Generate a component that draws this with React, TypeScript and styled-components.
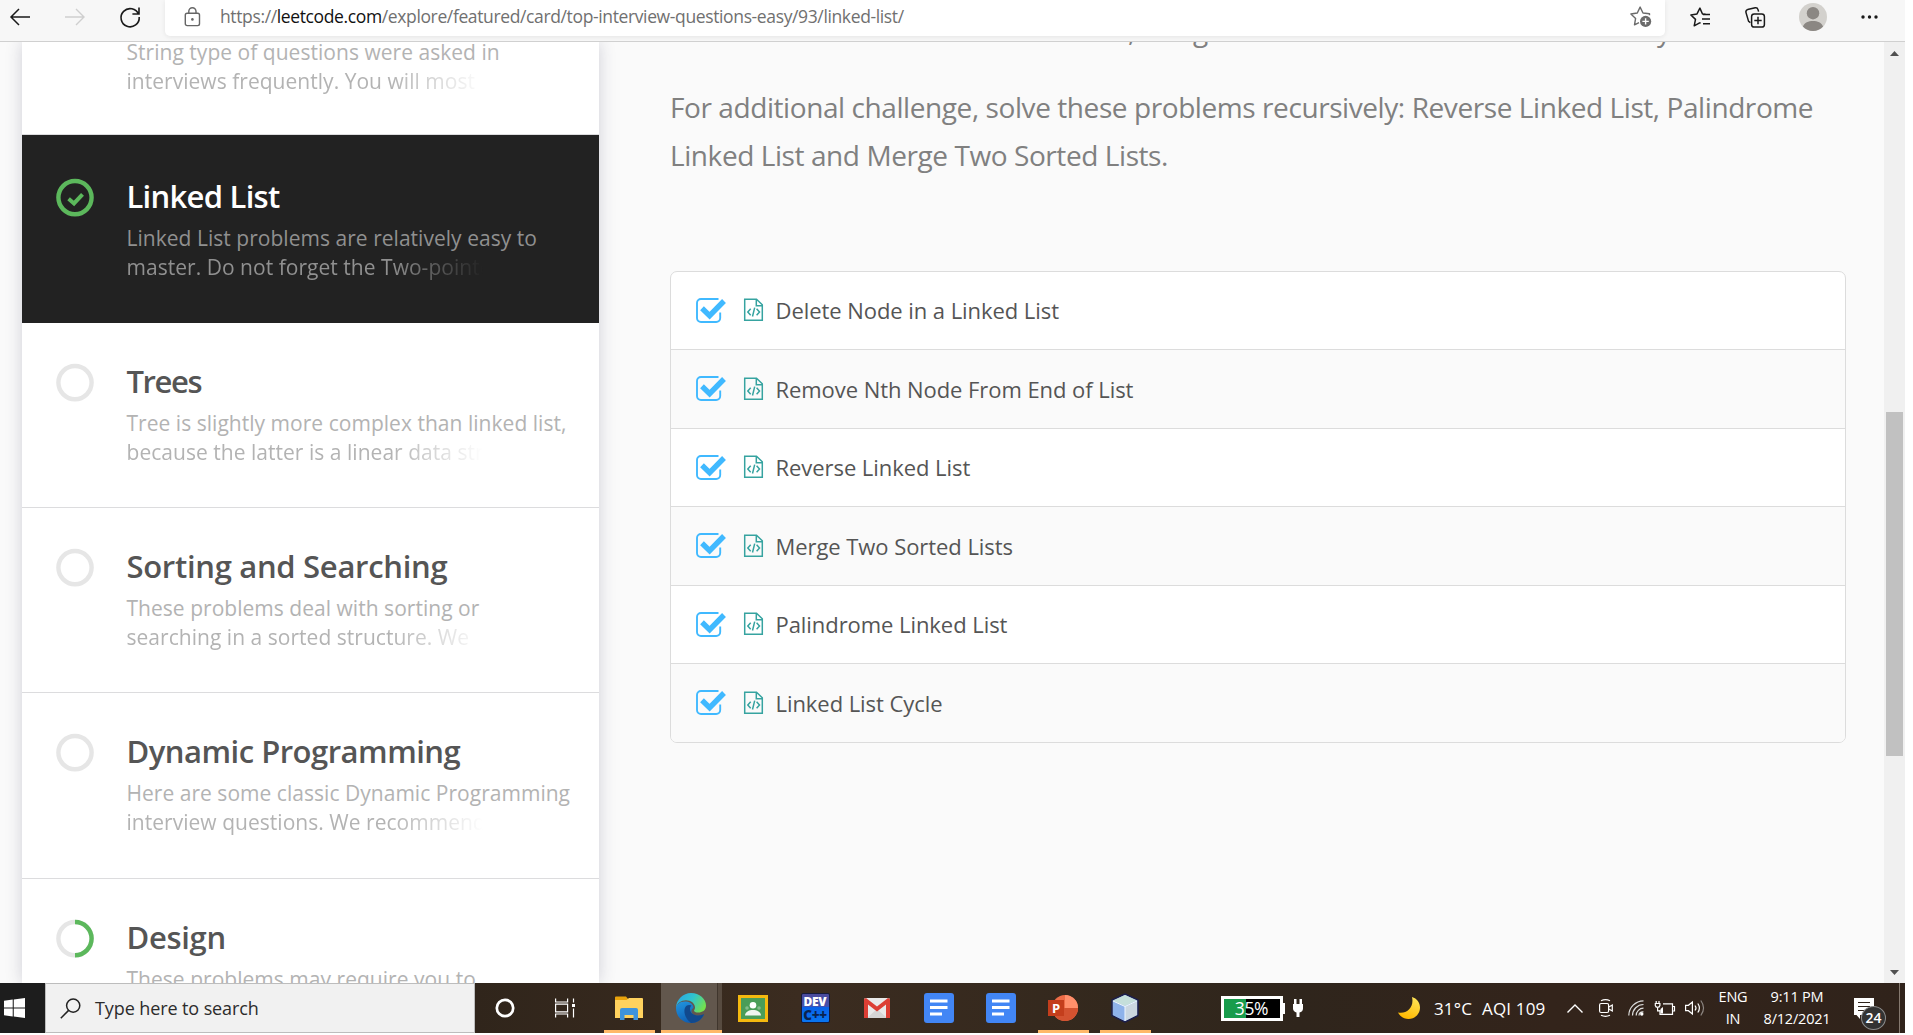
import React from "react";
import styled, { createGlobalStyle } from "styled-components";

const GlobalStyle = createGlobalStyle`
  * { box-sizing: border-box; }
  body { margin: 0; background: #fff; overflow: hidden; }
  svg { display: block; flex: none; overflow: visible; }
`;

const Screen = styled.div`
  width: 1905px;
  height: 1033px;
  display: flex;
  flex-direction: column;
  overflow: hidden;
  font-family: "Open Sans", "Noto Sans", sans-serif;
`;

/* ---------- browser toolbar ---------- */

const Toolbar = styled.header`
  height: 42px;
  flex: none;
  display: flex;
  align-items: flex-start;
  background: #f7f7f7;
  border-bottom: 1px solid #d0d0d0;
`;

const NavButtons = styled.div`
  width: 165px;
  height: 33px;
  padding-left: 10px;
  display: flex;
  align-items: center;
  gap: 35px;
`;

const AddressBar = styled.div`
  width: 1500px;
  height: 36px;
  display: flex;
  align-items: center;
  padding: 0 13px 3px 20px;
  background: #fff;
  border-radius: 0 0 5px 5px;
  box-shadow: 0 1px 5px rgba(0, 0, 0, 0.08);
`;

const Url = styled.div`
  flex: 1;
  margin-left: 19px;
  padding-bottom: 1px;
  font-size: 17.5px;
  line-height: 24px;
  letter-spacing: -0.37px;
  color: #707070;
  white-space: nowrap;
`;

const Host = styled.span`
  color: #111;
`;

const ToolbarActions = styled.div`
  height: 34px;
  margin-left: 25px;
  display: flex;
  align-items: center;
`;

const ActionSlot = styled.div<{ $width: number }>`
  width: ${(p) => p.$width}px;
`;

/* ---------- page ---------- */

const Page = styled.main`
  flex: 1;
  min-height: 0;
  display: flex;
  overflow: hidden;
  background: #fafafa;
`;

const Sidebar = styled.aside`
  width: 577px;
  margin-left: 22px;
  flex: none;
  background: #fff;
  box-shadow: 0 0 16px rgba(40, 40, 80, 0.2);
`;

const ChapterList = styled.div`
  margin-top: -90px;
`;

const Chapter = styled.article<{ $active?: boolean; $height: number }>`
  height: ${(p) => p.$height}px;
  display: flex;
  gap: 33px;
  padding: ${(p) => (p.$active ? 41 : 38)}px 0 0 33.5px;
  background: ${(p) => (p.$active ? "#222" : "#fff")};
  color: ${(p) => (p.$active ? "#fff" : "#555")};
  border-bottom: ${(p) => (p.$active ? "none" : "1px solid #dcdcde")};
`;

const ProgressSlot = styled.div`
  padding-top: 3px;
`;

const ChapterTitle = styled.h3<{ $tracking: number }>`
  margin: 0 0 8px;
  font-size: 31px;
  line-height: 40px;
  font-weight: 600;
  letter-spacing: ${(p) => p.$tracking}px;
  white-space: nowrap;
`;

const Blurb = styled.div<{ $active?: boolean }>`
  font-size: 21px;
  line-height: 29.3px;
  letter-spacing: 0.03px;
  white-space: nowrap;
  color: ${(p) => (p.$active ? "#909090" : "#b3b3b3")};
`;

const FadingLine = styled.div`
  width: 356px;
  overflow: hidden;
  mask-image: linear-gradient(to right, #000 74%, transparent 100%);
`;

const Content = styled.section`
  flex: 1;
  padding: 0 38px 0 71px;
  margin-top: -36px;
`;

const Paragraph = styled.p`
  margin: 0 0 29px;
  font-size: 28px;
  line-height: 48px;
  letter-spacing: -0.42px;
  color: #808080;
  white-space: nowrap;
`;

const ProblemCard = styled.ul`
  list-style: none;
  margin: 92px 0 0;
  padding: 0;
  width: 1176px;
  height: 472px;
  display: flex;
  flex-direction: column;
  overflow: hidden;
  background: #fff;
  border: 1px solid #dcdcdc;
  border-radius: 7px;
`;

const Problem = styled.li`
  flex: 1;
  display: flex;
  align-items: center;
  padding: 0 0 1px 25px;
  font-size: 22px;
  font-weight: 500;
  letter-spacing: -0.06px;
  color: #555;
  &:first-child { flex: 0 0 77.3px; }
  &:nth-child(even) { background: #fafafa; }
  & + & { border-top: 1px solid #dcdcdc; }
`;

const ProblemName = styled.span`
  margin-left: 12.5px;
`;

const FileSlot = styled.span`
  margin-left: 18px;
`;

const Scrollbar = styled.div`
  width: 21px;
  flex: none;
  display: flex;
  flex-direction: column;
  align-items: center;
  justify-content: space-between;
  padding: 9px 0 8px;
  background: #f0f0f0;
`;

const Thumb = styled.div`
  width: 17px;
  height: 344px;
  margin-bottom: -145px;
  margin-top: -145px;
  transform: translateY(71px);
  background: #c1c1c1;
`;

/* ---------- taskbar ---------- */

const Taskbar = styled.footer`
  height: 50px;
  flex: none;
  display: flex;
  color: #fff;
  background: linear-gradient(90deg, #1f1d1a 0, #30251b 475px, #3b2c20 800px, #33281d 1120px, #2f251c 1300px, #33241b 1550px, #30231b 100%);
`;

const Start = styled.div`
  width: 45px;
  padding: 15px 0 0 4px;
  background: #1d1d1d;
`;

const Search = styled.div`
  width: 430px;
  display: flex;
  align-items: center;
  padding-left: 14px;
  gap: 14px;
  color: #2c2c2c;
  background: #f1f1f1;
  border: 1px solid #bdbdbd;
  font-size: 18px;
  letter-spacing: -0.1px;
`;

const TaskSlot = styled.div<{ $width?: number }>`
  width: ${(p) => p.$width ?? 62}px;
  display: flex;
  flex-direction: column;
  align-items: center;
`;

const TaskButton = styled.div<{ $running?: boolean; $focused?: boolean }>`
  width: ${(p) => (p.$focused ? 61 : 51)}px;
  height: 50px;
  display: flex;
  align-items: center;
  justify-content: center;
  padding-top: ${(p) => (p.$running ? 3 : 0)}px;
  padding-right: ${(p) => (p.$focused ? 1 : 0)}px;
  border-bottom: ${(p) => (p.$running ? "3px solid #ffb969" : "none")};
  background: ${(p) =>
    p.$focused ? "linear-gradient(90deg, #62574d 56px, #40362d 56px, #40362d 57px, #574b40 57px)" : "none"};
`;

const PowerMeter = styled.div`
  width: 83px;
  margin-left: 65px;
  display: flex;
  align-items: center;
`;

const Battery = styled.div`
  width: 62px;
  height: 25px;
  border: 3px solid #fff;
  display: flex;
  align-items: center;
  justify-content: center;
  padding-right: 1px;
  background: linear-gradient(90deg, #189c4c 22px, #000 22px);
  font-size: 17.5px;
  letter-spacing: -0.4px;
`;

const BatteryTip = styled.div`
  width: 2px;
  height: 11px;
  margin-right: 7px;
  background: #fff;
`;

const Weather = styled.div`
  width: 147px;
  margin-left: 94px;
  display: flex;
  align-items: center;
  white-space: nowrap;
  font-size: 17px;
  letter-spacing: 0.15px;
`;

const Temperature = styled.span`
  margin: 0 10px 0 14px;
`;

const Tray = styled.div`
  margin-left: 22px;
  display: flex;
  align-items: center;
`;

const TraySlot = styled.div<{ $width: number }>`
  width: ${(p) => p.$width}px;
`;

const TrayText = styled.div<{ $width: number }>`
  width: ${(p) => p.$width}px;
  padding-bottom: 1px;
  text-align: center;
  font-size: 14.5px;
  line-height: 22px;
  letter-spacing: -0.2px;
`;

const Notifications = styled.div`
  position: relative;
  width: 21px;
  margin-left: 11px;
`;

const Badge = styled.span`
  position: absolute;
  left: 7px;
  top: 8px;
  width: 25px;
  height: 24px;
  border-radius: 50%;
  border: 1px solid #8c8c8c;
  background: #333;
  font-size: 14px;
  font-weight: 600;
  line-height: 21px;
  text-align: center;
`;

const ShowDesktop = styled.div`
  width: 6px;
  margin-left: auto;
  border-left: 1px solid #85796f;
`;

const ClassroomTile = styled.div`
  width: 30px;
  height: 27px;
  border: 3px solid #f5b90f;
  background: #4a9d58;
`;

const DevTile = styled.div`
  width: 29px;
  height: 30px;
  display: flex;
  flex-direction: column;
  align-items: center;
  border: 1px solid #151b3c;
  border-radius: 2px;
  background: linear-gradient(#4a4a9c, #4652ad 44%, #0a62e8 48%, #0876f2);
  font-weight: 800;
  font-size: 12px;
  line-height: 15px;
  letter-spacing: -0.3px;
`;

const DevSub = styled.div`
  color: #0b2350;
  font-size: 13.5px;
  line-height: 12px;
  letter-spacing: -0.4px;
`;

const PptMark = styled.span`
  position: absolute;
  left: 0;
  top: 5px;
  width: 16px;
  height: 16px;
  background: #c43e1c;
  font-size: 13px;
  font-weight: 700;
  line-height: 16px;
  text-align: center;
`;

const PptWrap = styled.div`
  position: relative;
`;

/* ---------- icons ---------- */

const BackArrow = ({ color }: { color: string }) => (
  <svg width="20" height="18" viewBox="0 0 20 18" fill="none" stroke={color} strokeWidth="1.5">
    <path d="M9 1 1 9l8 8M1 9h19" />
  </svg>
);

const ForwardArrow = ({ color }: { color: string }) => (
  <svg width="20" height="18" viewBox="0 0 20 18" fill="none" stroke={color} strokeWidth="1.4">
    <path d="M11 1l8 8-8 8M19 9H0" />
  </svg>
);

const Reload = () => (
  <svg width="20" height="20" viewBox="0 0 20 20" fill="none" stroke="#1a1a1a" strokeWidth="1.6">
    <path d="M18.6 7.4A9.1 9.1 0 1 0 19.2 10M19 .6V7h-6.6" />
  </svg>
);

const Lock = () => (
  <svg width="16" height="20" viewBox="0 0 16 20" fill="none" stroke="#666" strokeWidth="1.4">
    <rect x=".3" y="6.3" width="14.2" height="12.3" rx="1.8" />
    <path d="M3.8 6V4.300a3.600 3.600 0 0 1 7.200 0V6" />
    <circle cx="7.400" cy="12.400" r="1.300" fill="#666" stroke="none" />
  </svg>
);

const StarAdd = () => (
  <svg width="22" height="22" viewBox="0 0 22 22" fill="none" stroke="#6b6b6b" strokeWidth="1.4" strokeLinejoin="round">
    <path d="M19.5 9.2V7.8L13 7 10.1 1.1 7.3 7 .9 8l4.7 4.4-1.1 6.5L9 16.6" />
    <circle cx="15.6" cy="15.4" r="5.6" fill="#6b6b6b" stroke="none" />
    <path d="M15.6 12.2v6.4M12.4 15.4h6.4" stroke="#fff" />
  </svg>
);

const Favorites = () => (
  <svg width="20" height="20" viewBox="0 0 20 20" fill="none" stroke="#1a1a1a" strokeWidth="1.5" strokeLinejoin="round">
    <path d="M15.5 7.2 12.5 7 9.9 1.1 7 6.9.9 8l4.6 4.4-1.3 6.4 5.4-2.9 1-.2" />
    <path d="M13 7.4h7M12 12.1h8M13 16.8h7" />
  </svg>
);

const Collections = () => (
  <svg width="20" height="21" viewBox="0 0 20 21" fill="none" stroke="#1a1a1a" strokeWidth="1.5">
    <rect x="6.6" y="7" width="12.8" height="13" rx="2.6" />
    <path d="M13 9.8v7.4M9.3 13.5h7.4M5.4 15.6 3.6 14.4 1 5.6C.6 4 1.2 3 2.6 2.6L10.2.8c1.6-.3 2.4.4 2.8 1.8l.6 2" />
  </svg>
);

const Avatar = () => (
  <svg width="28" height="28" viewBox="0 0 28 28">
    <circle cx="14" cy="14" r="14" fill="#d3d1cd" />
    <circle cx="14" cy="10.2" r="6.2" fill="#8b8783" />
    <path d="M3.9 23.5C5.5 19.7 9.4 18 14 18s8.500 1.700 10.100 5.500A14 14 0 0 1 14 28a14 14 0 0 1-10.100-4.500z" fill="#8b8783" />
  </svg>
);

const Dots = () => (
  <svg width="17" height="4" viewBox="0 0 17 4" fill="#1a1a1a">
    <circle cx="2" cy="2" r="1.7" />
    <circle cx="8.500" cy="2" r="1.7" />
    <circle cx="15" cy="2" r="1.7" />
  </svg>
);

type Status = "done" | "none" | "half";

const Progress = ({ status }: { status: Status }) => (
  <svg width="38" height="38" viewBox="0 0 38 38" fill="none" strokeWidth="4.4">
    <circle cx="19" cy="18.600" r="16.600" stroke={status === "done" ? "#5cb85c" : "#e6e6e6"} />
    {status === "half" && <path d="M19 2a16.600 16.600 0 0 1 0 33.200" stroke="#5cb85c" />}
    {status === "done" && <path d="M12.600 19.800l5.400 4.600 8.500-9" stroke="#5cb85c" strokeWidth="4" />}
  </svg>
);

const CheckBox = () => (
  <svg width="30" height="25" viewBox="0 0 30 25" fill="none" stroke="#40b9ff">
    <path d="M22.500 1H5a4 4 0 0 0-4 4v15a4 4 0 0 0 4 4h15.200a4 4 0 0 0 4-4v-5.500" strokeWidth="1.900" />
    <path d="M6 10.300l7.600 7.300L28 3" strokeWidth="5.400" />
  </svg>
);

const CodeFile = () => (
  <svg width="19" height="22" viewBox="0 0 19 22" fill="none" stroke="#36a3a0" strokeWidth="1.500">
    <path d="M.7.2h11.800l5.800 5.600v15.500H.7zM12.300.2v6.500h6" />
    <path d="M6.700 9.800 3.800 13l2.900 3.200M12.600 9.800l2.900 3.200-2.900 3.200M10.700 8.600 8.500 17.500" />
  </svg>
);

const Arrow = ({ down }: { down?: boolean }) => (
  <svg width="9" height="5" viewBox="0 0 9 5" fill="#505050">
    <path d={down ? "M0 0h9L4.500 5z" : "M0 5h9L4.500 0z"} />
  </svg>
);

const WindowsLogo = () => (
  <svg width="21" height="20" viewBox="0 0 20 20" preserveAspectRatio="none" fill="#fff">
    <path d="M0 2.800 8.300 1.600v7.900H0zM9.300 1.400 20 0v9.500H9.300zM0 10.500h8.300v7.900L0 17.200zM9.300 10.500H20V20L9.300 18.600z" />
  </svg>
);

const Magnifier = () => (
  <svg width="21" height="21" viewBox="0 0 21 21" fill="none" stroke="#222" strokeWidth="1.500">
    <circle cx="13.200" cy="7.600" r="6.600" />
    <path d="M8.600 12.400.8 20.200" />
  </svg>
);

const Cortana = () => (
  <svg width="20" height="20" viewBox="0 0 20 20" fill="none" stroke="#fff" strokeWidth="2.700">
    <circle cx="10" cy="10" r="8.200" />
  </svg>
);

const TaskView = () => (
  <svg width="20" height="20" viewBox="0 0 20 20" fill="none" stroke="#fff" strokeWidth="1.200">
    <path d="M.6.500v3.500h12V.500M.6 19.500V16h12v3.500M.6 6.200h12v7.600H.6zM18.500.500v4M18.500 10.500v9" />
    <path d="M17 6h3v3h-3z" fill="#fff" stroke="none" />
  </svg>
);

const Explorer = () => (
  <svg width="28" height="24" viewBox="0 0 28 24">
    <path d="M0 1.500Q0 .5 1 .5h10l2.500 3H28V22H0z" fill="#e9a30c" />
    <path d="M0 4h11.500L14 2h13q1 0 1 1v19H0z" fill="#ffd25e" />
    <path d="M5 24V14q0-2 2-2h14q2 0 2 2v10h-4.500v-5h-9v5z" fill="#3d93dc" />
  </svg>
);

const EdgeLogo = () => (
  <svg width="30" height="30" viewBox="0 0 30 30">
    <defs>
      <linearGradient id="edgeTop" x1="0" x2="1" y1="0.200" y2="0.600">
        <stop offset="0" stopColor="#2ba6e0" />
        <stop offset=".5" stopColor="#2fc5cf" />
        <stop offset="1" stopColor="#74e04c" />
      </linearGradient>
      <linearGradient id="edgeBody" x1="0" x2="0.500" y1="0" y2="1">
        <stop offset="0" stopColor="#2196e0" />
        <stop offset="1" stopColor="#0f5cb0" />
      </linearGradient>
    </defs>
    <path d="M0 15C0 12 4 8 10 8.500c5 .4 7.500 3.500 7.500 6.500-2 1-3.500 4 0 6.500 4 2.500 8.500 1 10.500 0C25.500 27 20.500 30 15 30 6.500 30 0 23.500 0 15z" fill="url(#edgeBody)" />
    <path d="M10.500 12.800C7 15.500 7.500 24.500 15 29.900c6 .1 10.500-3.400 12.700-7.900.3-.8-.2-1-.8-.6-5 2.600-12.900.6-12.900-5.400 0-1.600.8-2.700 1.600-3.400-1.800-.8-3.600-.7-5.100.2z" fill="#11498d" />
    <path d="M0 14.500C.5 6.500 7 0 15 0c8.500 0 15 6 15 12.500 0 5-4 7-7.500 7-3 0-4.500-1-4.500-1.800 0-.8 1-1 1-3.200C19 10.500 15 7.300 10 7.300c-5 0-8.700 3-10 7.200z" fill="url(#edgeTop)" />
  </svg>
);

const ClassroomPeople = () => (
  <svg width="24" height="21" viewBox="0 0 24 21">
    <circle cx="12" cy="7.200" r="3.300" fill="#fff" />
    <circle cx="6" cy="10" r="1.800" fill="#83bc8b" />
    <circle cx="18" cy="10" r="1.800" fill="#83bc8b" />
    <path d="M4 17.500c0-3.500 4-5.500 8-5.500s8 2 8 5.500z" fill="#f0f5ee" />
  </svg>
);

const Gmail = () => (
  <svg width="26" height="20" viewBox="0 0 26 20">
    <rect width="26" height="20" rx="1.500" fill="#e9e9e9" />
    <path d="M3 20l10-9 10 9z" fill="#d5d5d5" />
    <path d="M0 1.500V20h4V6.500l9 7 9-7V20h4V1.500Q25.500 0 24 0L13 8.500 2 0Q.5 0 0 1.500z" fill="#dc3e34" />
  </svg>
);

const Docs = () => (
  <svg width="30" height="30" viewBox="0 0 30 30">
    <rect width="30" height="30" rx="3" fill="#4286f5" />
    <path d="M6 8h17.500M6 14.500h17.500M6 21h12" stroke="#fff" strokeWidth="3" />
  </svg>
);

const PowerPoint = () => (
  <PptWrap>
    <svg width="30" height="26" viewBox="0 0 30 26">
      <circle cx="17" cy="13" r="13" fill="#ed6c47" />
      <path d="M17 0a13 13 0 0 1 13 13H17z" fill="#ff8f6b" />
      <path d="M4 13h26a13 13 0 0 1-26 0z" fill="#d35230" />
    </svg>
    <PptMark>P</PptMark>
  </PptWrap>
);

const Cube = () => (
  <svg width="28" height="30" viewBox="0 0 28 30" stroke="#1c1f4c" strokeWidth="1.500" strokeLinejoin="round">
    <path d="M14 1 27 7v15.500L14 29 1 22.500V7z" fill="#9fb8dc" />
    <path d="M14 2 26 7.500 14 13 2 7.500z" fill="#c5dfdb" stroke="none" />
    <path d="M2 8.500l12 5.200V28L2 22z" fill="#8eb2ea" stroke="none" />
    <path d="M26 8.500l-12 5.200V28l12-6z" fill="#cad6e0" stroke="none" />
    <path d="M2 8l12 5.500L26 8M14 13.500V28" fill="none" stroke="#eef6ff" strokeWidth="1" />
  </svg>
);

const Plug = () => (
  <svg width="12" height="18" viewBox="0 0 12 18" fill="#fff">
    <path d="M2 0h2.500v5h3V0H10v5h1v4.500c0 2-1.500 3.700-3.500 4V18h-3v-4.500C2.500 13 1 11.500 1 9.500V5h1z" />
  </svg>
);

const Moon = () => (
  <svg width="22" height="22" viewBox="0 0 22 22">
    <defs>
      <linearGradient id="moonFill" x1="0.800" y1="0" x2="0.400" y2="1">
        <stop offset="0" stopColor="#ffe65a" />
        <stop offset="1" stopColor="#ffb800" />
      </linearGradient>
    </defs>
    <path d="M14 0c5 1.500 8 5.500 8 10.500C22 17 17 22 10.500 22 6 22 2 19.500 0 15.500c8 2 16.500-4.500 14-15.500z" fill="url(#moonFill)" />
  </svg>
);

const Chevron = () => (
  <svg width="16" height="9" viewBox="0 0 16 9" fill="none" stroke="#fff" strokeWidth="1.400">
    <path d="M.5 8.500 8 1l7.500 7.500" />
  </svg>
);

const MeetNow = () => (
  <svg width="14" height="18" viewBox="0 0 14 18" fill="none" stroke="#fff" strokeWidth="1.200">
    <rect x=".6" y="4.500" width="9" height="9" rx="1.500" />
    <path d="M9.800 8l3.500-2v6l-3.500-2M2 1.800Q6.500-.4 11 1.800M2 16.200q4.500 2.200 9 0" />
  </svg>
);

const Wifi = () => (
  <svg width="16" height="16" viewBox="0 0 16 16" fill="none" stroke="#ddd" strokeWidth="1.200">
    <path d="M.8 15.500A15 15 0 0 1 15.500.8M4.500 15.500a11 11 0 0 1 11-11M8.200 15.500a7.300 7.300 0 0 1 7.300-7.300" />
    <path d="M11 15.500a3.500 3.500 0 0 1 4.500-3.500" />
    <circle cx="13.800" cy="14" r="1.700" fill="#fff" stroke="none" />
  </svg>
);

const Charging = () => (
  <svg width="20" height="15" viewBox="0 0 20 15" fill="none" stroke="#fff" strokeWidth="1.200">
    <path d="M8 2.800h9.500v10.500H5V9M17.800 5.500h1.700v4.500h-1.700M1.200 0v2M4 0v2M.3 2.500h4.600v2Q4.500 6.300 2.600 6.300T.3 4.500zM2.600 6.500v3.300H5" />
    <path d="M5.500 8 8 6v6.500H5.500z" fill="#fff" stroke="none" />
  </svg>
);

const Speaker = () => (
  <svg width="20" height="18" viewBox="0 0 20 18" fill="none" stroke="#fff" strokeWidth="1.200">
    <path d="M.6 6.300h2.800L7.400 3v12l-4-3.300H.6zM10 6.500q2 2.500 0 5M12.800 4.500q3.200 4.500 0 9" />
    <path d="M15.800 1.500q5.500 7.500 0 15" stroke="#8c8580" />
  </svg>
);

const Note = () => (
  <svg width="20" height="21" viewBox="0 0 20 21">
    <path d="M0 0h20v17H6v4l-3.500-4H0z" fill="#fff" />
    <path d="M4 4.500h12M4 8.500h12M4 12.500h12" stroke="#2f231b" strokeWidth="1" />
  </svg>
);

/* ---------- data ---------- */

interface ChapterData {
  title: string;
  tracking: number;
  lines: [string, string];
  status: Status;
  height: number;
  active?: boolean;
}

const chapters: ChapterData[] = [
  { title: "Strings", tracking: -0.5, lines: ["String type of questions were asked in", "interviews frequently. You will most likely"], status: "done", height: 183 },
  { title: "Linked List", tracking: -0.73, lines: ["Linked List problems are relatively easy to", "master. Do not forget the Two-pointer"], status: "done", height: 188, active: true },
  { title: "Trees", tracking: -1.4, lines: ["Tree is slightly more complex than linked list,", "because the latter is a linear data structure"], status: "none", height: 185 },
  { title: "Sorting and Searching", tracking: -0.3, lines: ["These problems deal with sorting or", "searching in a sorted structure. We"], status: "none", height: 185 },
  { title: "Dynamic Programming", tracking: -0.5, lines: ["Here are some classic Dynamic Programming", "interview questions. We recommend"], status: "none", height: 186 },
  { title: "Design", tracking: -0.3, lines: ["These problems may require you to", "implement a given interface"], status: "half", height: 186 },
];

const problems = [
  "Delete Node in a Linked List",
  "Remove Nth Node From End of List",
  "Reverse Linked List",
  "Merge Two Sorted Lists",
  "Palindrome Linked List",
  "Linked List Cycle",
];

const apps: { icon: React.ReactNode; running?: boolean; focused?: boolean }[] = [
  { icon: <Explorer />, running: true },
  { icon: <EdgeLogo />, running: true, focused: true },
  { icon: <ClassroomTile><ClassroomPeople /></ClassroomTile> },
  { icon: <DevTile>DEV<DevSub>C++</DevSub></DevTile> },
  { icon: <Gmail /> },
  { icon: <Docs /> },
  { icon: <Docs /> },
  { icon: <PowerPoint />, running: true },
  { icon: <Cube />, running: true },
];

export default function App() {
  return (
    <Screen>
      <GlobalStyle />
      <Toolbar>
        <NavButtons>
          <BackArrow color="#1a1a1a" />
          <ForwardArrow color="#cfcfcf" />
          <Reload />
        </NavButtons>
        <AddressBar>
          <Lock />
          <Url>
            https://<Host>leetcode.com</Host>/explore/featured/card/top-interview-questions-easy/93/linked-list/
          </Url>
          <StarAdd />
        </AddressBar>
        <ToolbarActions>
          <ActionSlot $width={55}><Favorites /></ActionSlot>
          <ActionSlot $width={54}><Collections /></ActionSlot>
          <ActionSlot $width={62}><Avatar /></ActionSlot>
          <Dots />
        </ToolbarActions>
      </Toolbar>

      <Page>
        <Sidebar>
          <ChapterList>
            {chapters.map((c) => (
              <Chapter key={c.title} $active={c.active} $height={c.height}>
                <ProgressSlot><Progress status={c.status} /></ProgressSlot>
                <div>
                  <ChapterTitle $tracking={c.tracking}>{c.title}</ChapterTitle>
                  <Blurb $active={c.active}>
                    {c.lines[0]}
                    <FadingLine>{c.lines[1]}</FadingLine>
                  </Blurb>
                </div>
              </Chapter>
            ))}
          </ChapterList>
        </Sidebar>
        <Content>
          <Paragraph>
            We recommend: Reverse Linked List, Merge Two Sorted Lists and Linked List Cycle.
          </Paragraph>
          <Paragraph>
            For additional challenge, solve these problems recursively: Reverse Linked List, Palindrome
            <br />
            Linked List and Merge Two Sorted Lists.
          </Paragraph>
          <ProblemCard>
            {problems.map((name) => (
              <Problem key={name}>
                <CheckBox />
                <FileSlot><CodeFile /></FileSlot>
                <ProblemName>{name}</ProblemName>
              </Problem>
            ))}
          </ProblemCard>
        </Content>
        <Scrollbar>
          <Arrow />
          <Thumb />
          <Arrow down />
        </Scrollbar>
      </Page>

      <Taskbar>
        <Start><WindowsLogo /></Start>
        <Search><Magnifier />Type here to search</Search>
        <TaskSlot $width={60}><TaskButton><Cortana /></TaskButton></TaskSlot>
        <TaskSlot $width={59}><TaskButton><TaskView /></TaskButton></TaskSlot>
        <TaskSlot $width={4} />
        {apps.map((app, i) => (
          <TaskSlot key={i}>
            <TaskButton $running={app.running} $focused={app.focused}>{app.icon}</TaskButton>
          </TaskSlot>
        ))}
        <PowerMeter>
          <Battery>35%</Battery>
          <BatteryTip />
          <Plug />
        </PowerMeter>
        <Weather>
          <Moon />
          <Temperature>31°C</Temperature>
          AQI 109
        </Weather>
        <Tray>
          <TraySlot $width={32}><Chevron /></TraySlot>
          <TraySlot $width={29}><MeetNow /></TraySlot>
          <TraySlot $width={27}><Wifi /></TraySlot>
          <TraySlot $width={30}><Charging /></TraySlot>
          <TraySlot $width={30}><Speaker /></TraySlot>
          <TrayText $width={36}>ENG<br />IN</TrayText>
          <TrayText $width={92}>9:11 PM<br />8/12/2021</TrayText>
          <Notifications>
            <Note />
            <Badge>24</Badge>
          </Notifications>
        </Tray>
        <ShowDesktop />
      </Taskbar>
    </Screen>
  );
}
